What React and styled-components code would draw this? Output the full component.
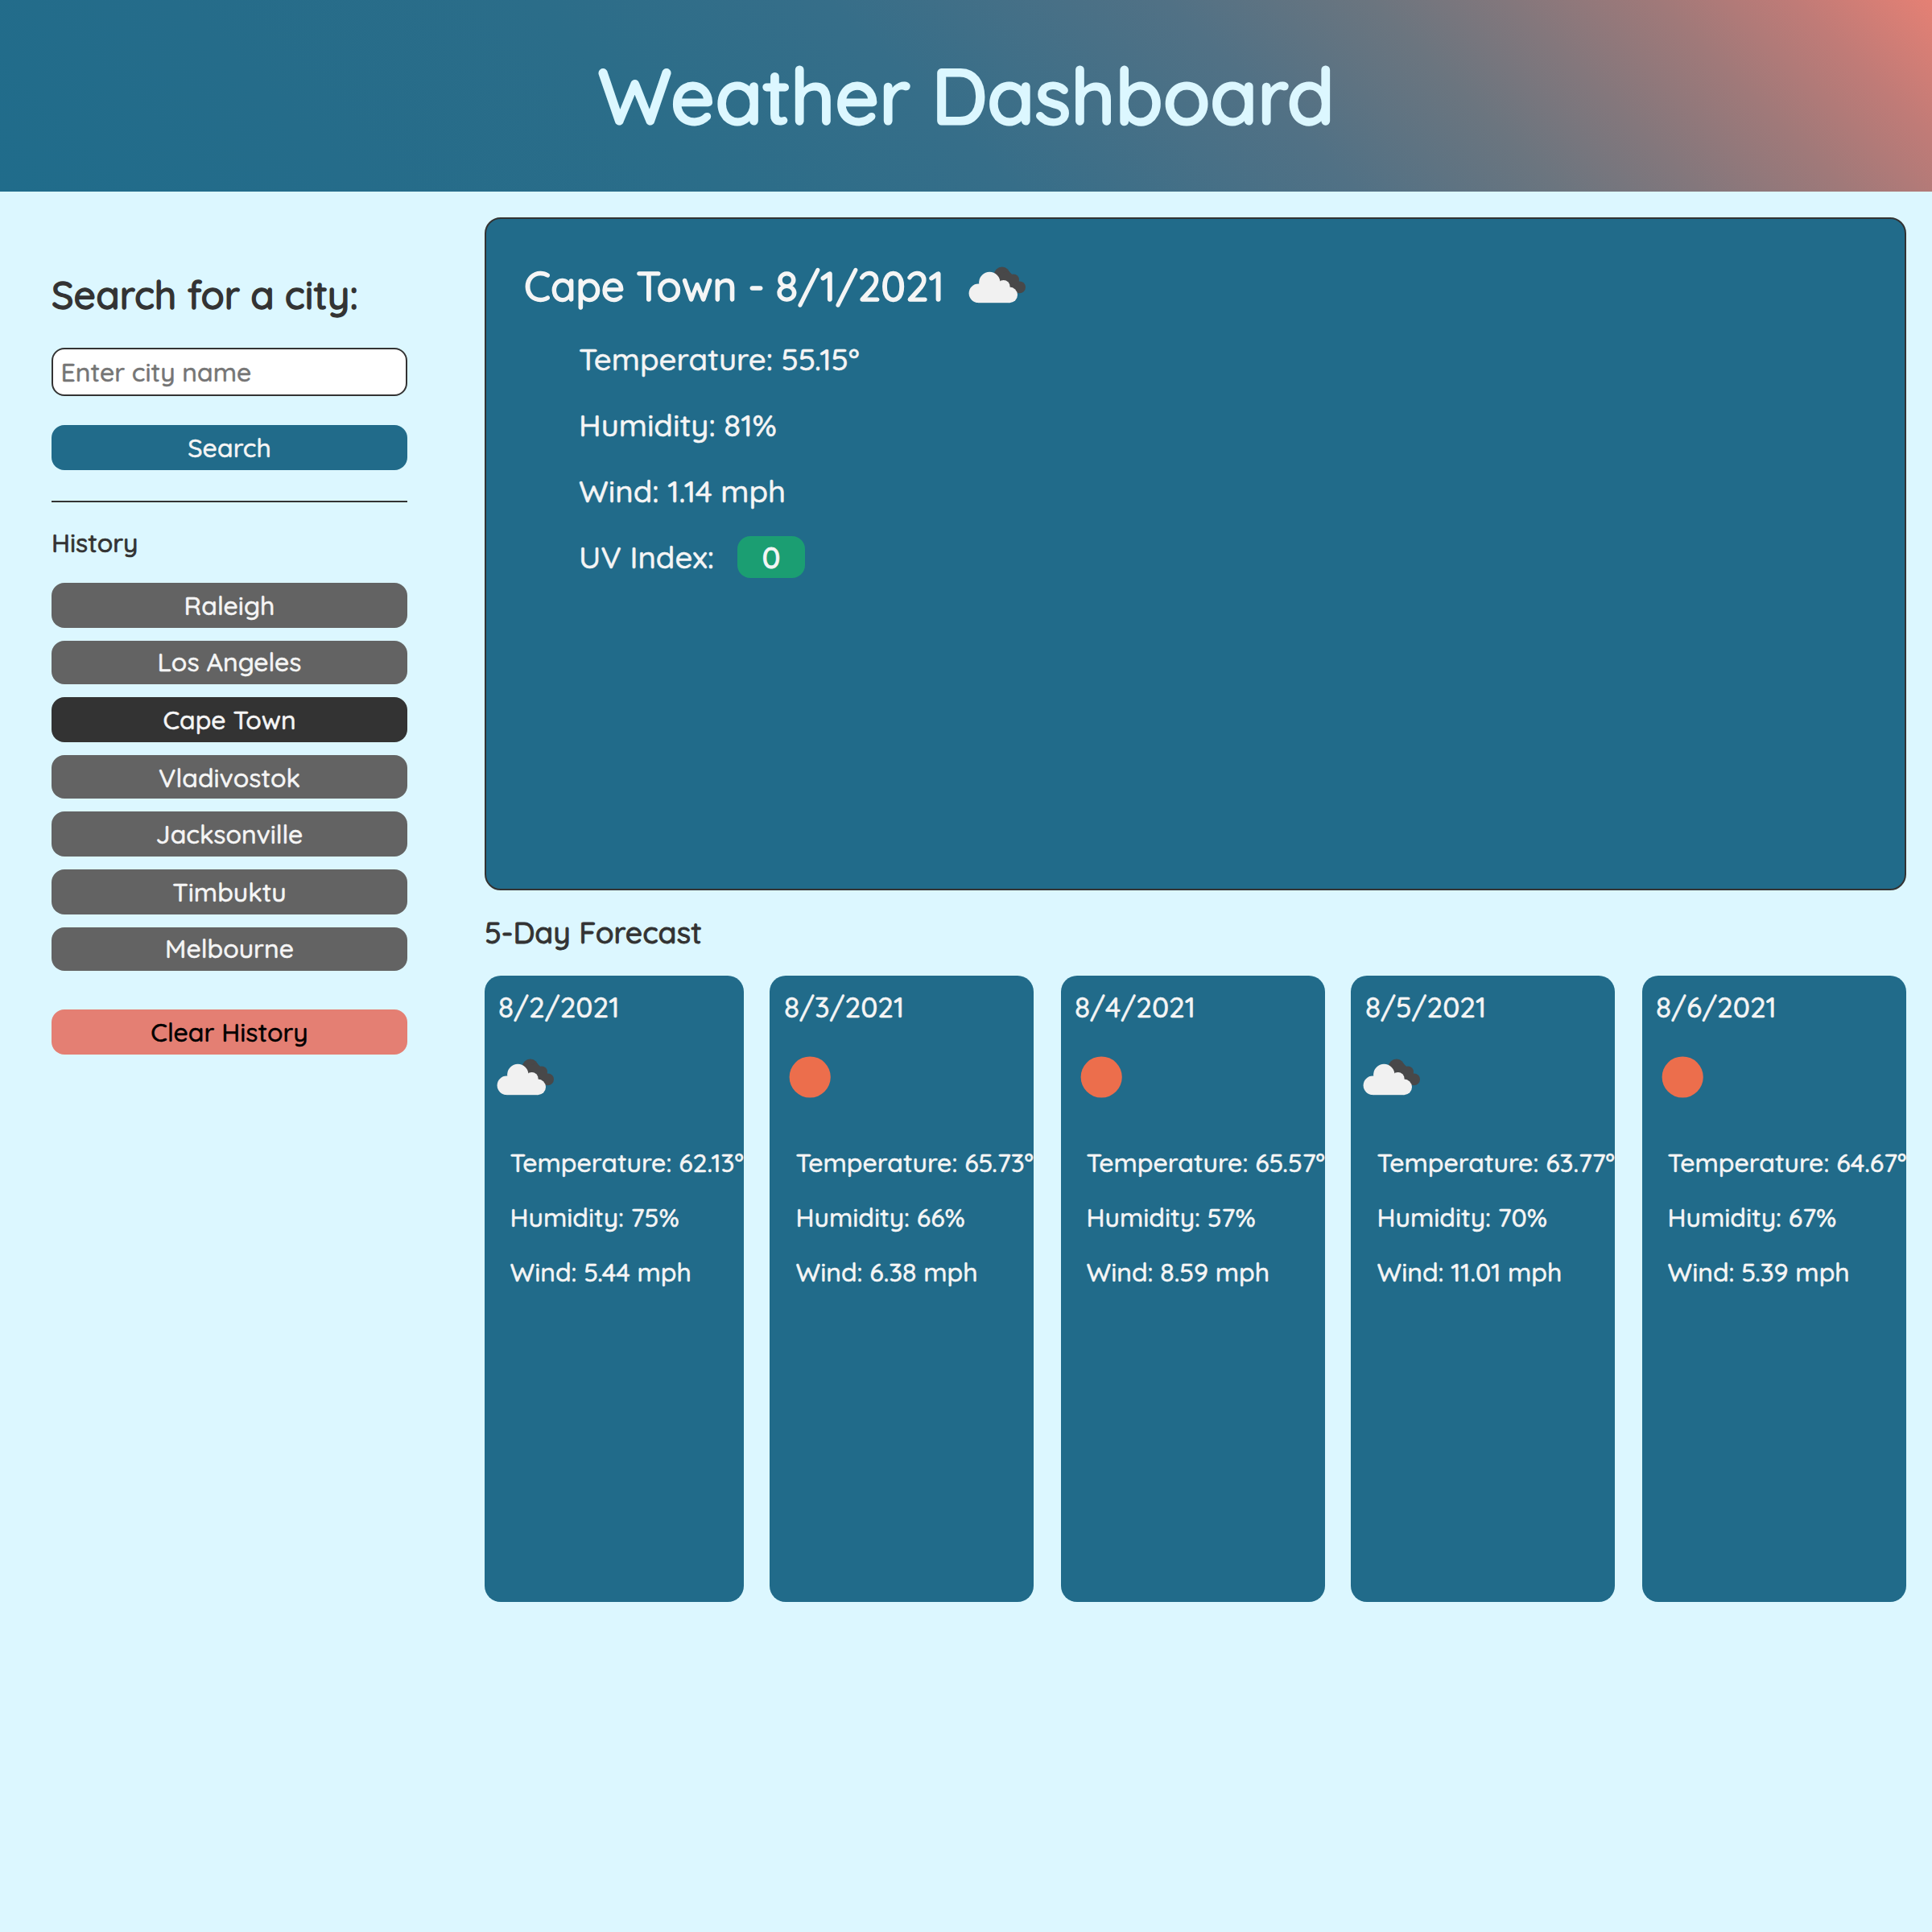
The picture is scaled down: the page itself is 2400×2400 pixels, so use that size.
import React from "react";
import styled, { createGlobalStyle } from "styled-components";

const fontStack = `Quicksand, Lato, sans-serif`;

const GlobalStyle = createGlobalStyle`
  * { box-sizing: border-box; }
  body {
    margin: 0;
    background: #dcf7ff;
    color: #333;
    font-family: ${fontStack};
    font-size: 32px;
    font-weight: 500;
    line-height: 1.25;
    -webkit-text-stroke: 0.5px currentColor;
  }
  h1, h2, h3, h4, p, ul { margin: 0; padding: 0; font-weight: 500; }
  ul { list-style: none; }
`;

const Page = styled.div`
  min-height: 2400px;
`;

const Header = styled.header`
  display: flex;
  align-items: center;
  justify-content: center;
  height: 238px;
  padding-bottom: 2px;
  background: linear-gradient(
    45deg,
    #206c8b 0%,
    #256c8a 17%,
    #2b6d89 34%,
    #366e89 48%,
    #517185 64%,
    #6b757f 73.5%,
    #83777c 80%,
    #a07979 87%,
    #c07b77 93.5%,
    #e58074 100%
  );
`;

const Title = styled.h1`
  color: #dcf7ff;
  font-size: 96px;
  line-height: 120px;
  -webkit-text-stroke: 3px currentColor;
`;

const Main = styled.main`
  display: flex;
  align-items: flex-start;
  padding-right: 32px;
`;

const Sidebar = styled.aside`
  display: flex;
  flex-direction: column;
  flex: none;
  width: 442px;
  margin: 98px 96px 0 64px;
`;

const SearchTitle = styled.h2`
  font-size: 48px;
  line-height: 60px;
  -webkit-text-stroke: 1.4px currentColor;
`;

const SearchForm = styled.form`
  display: flex;
  flex-direction: column;
  gap: 36px;
  margin-top: 36px;
  padding-bottom: 38px;
  border-bottom: 2px solid #333;
`;

const CityInput = styled.input`
  height: 60px;
  padding: 0 10px 0 9.5px;
  border: 2px solid #333;
  border-radius: 16px;
  outline: 0;
  background: #fff;
  font: 500 32px/40px ${fontStack};

  &::placeholder {
    color: #757575;
    opacity: 1;
  }
`;

const tones = {
  primary: { background: "#216b8a", color: "#f5f5f5" },
  muted: { background: "#636363", color: "#f5f5f5" },
  current: { background: "#333333", color: "#f5f5f5" },
  danger: { background: "#e47f73", color: "#000000" },
};

const Button = styled.button`
  display: flex;
  align-items: center;
  justify-content: center;
  width: 100%;
  height: 56px;
  padding: 0;
  border: 0;
  border-radius: 16px;
  font: 500 32px/40px ${fontStack};
  background: ${({ $tone }) => tones[$tone].background};
  color: ${({ $tone }) => tones[$tone].color};
`;

const HistoryTitle = styled.h4`
  margin-top: 30px;
  font-size: 32px;
  line-height: 40px;
  -webkit-text-stroke: 0.7px currentColor;
`;

const HistoryList = styled.ul`
  display: flex;
  flex-direction: column;
  gap: 16px;
  margin: 30px 0 48px;

  li:nth-child(2) ${Button},
  li:nth-child(7) ${Button} {
    height: 54px;
    padding-bottom: 2px;
  }

  li:nth-child(4) ${Button} {
    height: 54px;
    padding-top: 2px;
  }
`;

const Content = styled.section`
  flex: 1;
  padding-top: 32px;
`;

const CurrentCard = styled.article`
  height: 836px;
  padding: 32px 46px 32px 47px;
  border: 2px solid #333;
  border-radius: 20px;
  background: #216b8a;
  color: #f5f5f5;
`;

const CurrentHeading = styled.div`
  display: flex;
  align-items: center;
  gap: 15px;
  height: 100px;
`;

const CityName = styled.h2`
  margin-top: 2px;
  font-size: 51.2px;
  line-height: 64px;
  -webkit-text-stroke: 1.4px currentColor;
`;

const Readings = styled.ul`
  display: flex;
  flex-direction: column;
  gap: 34px;
  margin: 18px 0 0 68px;
  font-size: 38.4px;
  line-height: 48px;
`;

const UvReading = styled.li`
  display: flex;
  align-items: center;
  gap: 29px;
  height: 48px;
`;

const UvBadge = styled.span`
  flex: none;
  width: 84px;
  height: 52px;
  border-radius: 16px;
  background: #1b9e72;
  line-height: 52px;
  text-align: center;
  -webkit-text-stroke: 0.8px currentColor;
`;

const ForecastTitle = styled.h3`
  margin: 29px 0 30px;
  font-size: 37.44px;
  line-height: 47px;
  -webkit-text-stroke: 0.9px currentColor;
`;

const ForecastRow = styled.div`
  display: flex;
  gap: 32px;
`;

const DayDate = styled.p`
  margin-left: 17px;
  font-size: 35.2px;
  line-height: 44px;
`;

const IconSvg = styled.svg`
  display: block;
  flex: none;
  width: 100px;
  height: 100px;
`;

const DayIcon = styled.div`
  margin-top: 15px;
`;

const DayReadings = styled.ul`
  display: flex;
  flex-direction: column;
  gap: 28px;
  margin: 36px 0 0 31.5px;
`;

const DayCard = styled.article`
  flex: 0 0 328px;
  height: 778px;
  padding-top: 17px;
  border-radius: 20px;
  background: #216b8a;
  color: #f5f5f5;
  white-space: nowrap;

  &:first-child { flex-basis: 322px; }
  &:nth-child(3), &:nth-child(5) { margin-left: 2px; }
  &:nth-child(even) ${DayDate} { margin-left: 18px; }
  &:nth-child(even) ${DayReadings} { margin-left: 32.5px; }
`;

const CloudsIcon = () => (
  <IconSvg viewBox="0 0 100 100">
    <g fill="#484849">
      <circle cx="56.8" cy="37.6" r="10" />
      <circle cx="71" cy="43.4" r="7" />
      <circle cx="78.6" cy="52.8" r="7.4" />
      <path d="M50 40 L64 32 L77 44 L84 58 L76 60 L60 52 Z" />
    </g>
    <g fill="#f1f1f1">
      <circle cx="41.3" cy="47" r="13.2" />
      <circle cx="27.4" cy="60.3" r="11.8" />
      <circle cx="58.6" cy="52" r="8" />
      <circle cx="66.2" cy="62.4" r="9.8" />
      <rect x="27" y="50" width="39" height="22.2" />
    </g>
  </IconSvg>
);

const SunIcon = () => (
  <IconSvg viewBox="0 0 100 100">
    <circle cx="50.2" cy="50" r="25.6" fill="#ec6e4c" />
  </IconSvg>
);

const cities = [
  "Raleigh",
  "Los Angeles",
  "Cape Town",
  "Vladivostok",
  "Jacksonville",
  "Timbuktu",
  "Melbourne",
];

const days = [
  { date: "8/2/2021", Icon: CloudsIcon, temp: "62.13", humidity: 75, wind: "5.44" },
  { date: "8/3/2021", Icon: SunIcon, temp: "65.73", humidity: 66, wind: "6.38" },
  { date: "8/4/2021", Icon: SunIcon, temp: "65.57", humidity: 57, wind: "8.59" },
  { date: "8/5/2021", Icon: CloudsIcon, temp: "63.77", humidity: 70, wind: "11.01" },
  { date: "8/6/2021", Icon: SunIcon, temp: "64.67", humidity: 67, wind: "5.39" },
];

export default function App() {
  return (
    <Page>
      <GlobalStyle />
      <Header>
        <Title>Weather Dashboard</Title>
      </Header>
      <Main>
        <Sidebar>
          <SearchTitle>Search for a city:</SearchTitle>
          <SearchForm>
            <CityInput placeholder="Enter city name" />
            <Button type="button" $tone="primary">Search</Button>
          </SearchForm>
          <HistoryTitle>History</HistoryTitle>
          <HistoryList>
            {cities.map((city) => (
              <li key={city}>
                <Button type="button" $tone={city === "Cape Town" ? "current" : "muted"}>
                  {city}
                </Button>
              </li>
            ))}
          </HistoryList>
          <Button type="button" $tone="danger">Clear History</Button>
        </Sidebar>
        <Content>
          <CurrentCard>
            <CurrentHeading>
              <CityName>Cape Town - 8/1/2021</CityName>
              <CloudsIcon />
            </CurrentHeading>
            <Readings>
              <li>Temperature: 55.15°</li>
              <li>Humidity: 81%</li>
              <li>Wind: 1.14 mph</li>
              <UvReading>
                UV Index: <UvBadge>0</UvBadge>
              </UvReading>
            </Readings>
          </CurrentCard>
          <ForecastTitle>5-Day Forecast</ForecastTitle>
          <ForecastRow>
            {days.map(({ date, Icon, temp, humidity, wind }) => (
              <DayCard key={date}>
                <DayDate>{date}</DayDate>
                <DayIcon>
                  <Icon />
                </DayIcon>
                <DayReadings>
                  <li>Temperature: {temp}°</li>
                  <li>Humidity: {humidity}%</li>
                  <li>Wind: {wind} mph</li>
                </DayReadings>
              </DayCard>
            ))}
          </ForecastRow>
        </Content>
      </Main>
    </Page>
  );
}
